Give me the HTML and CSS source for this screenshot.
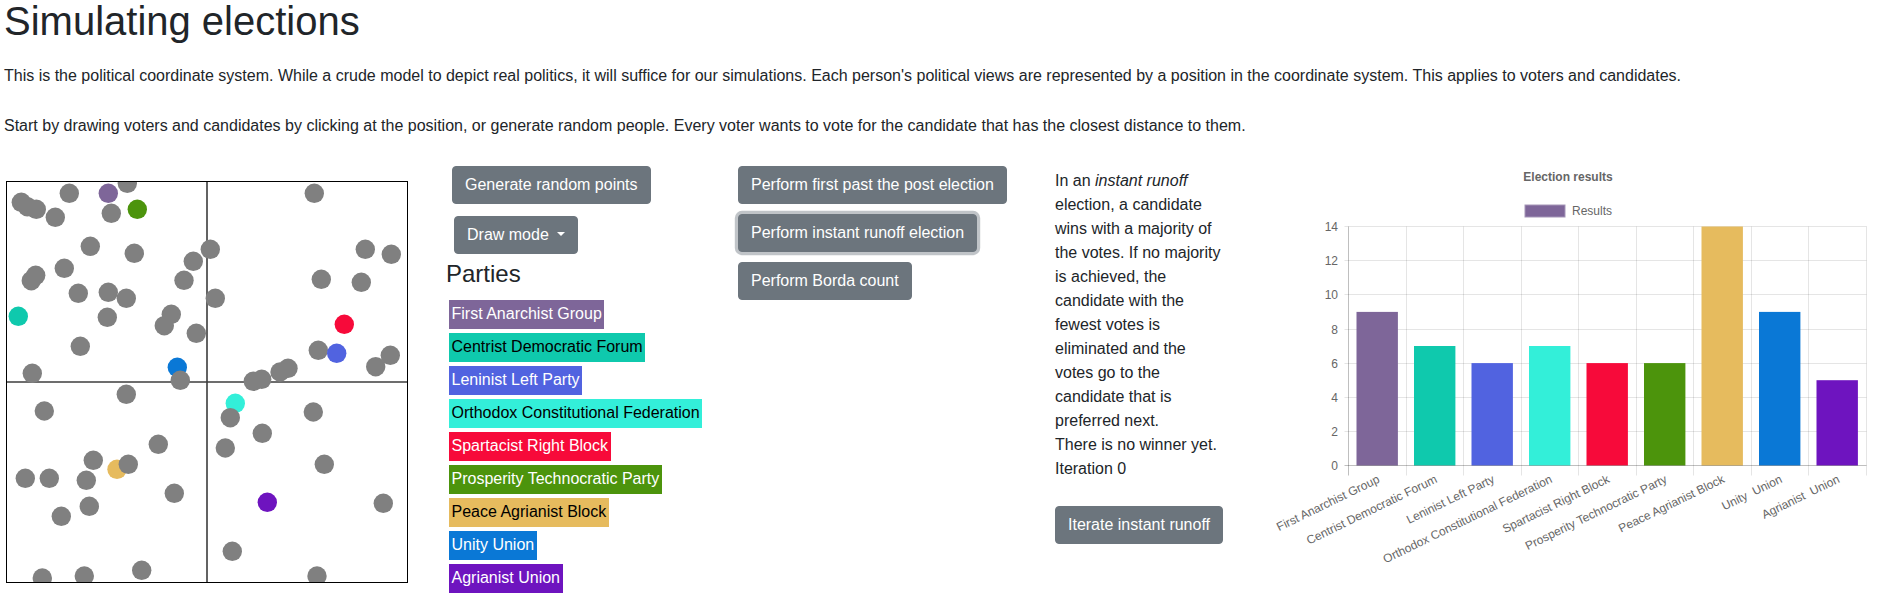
FILE: index.html
```html
<!DOCTYPE html>
<html lang="en">
<head>
<meta charset="utf-8">
<title>Simulating elections</title>
<link rel="stylesheet" href="styles.css">
</head>
<body>
<div class="page">
  <h1 class="title">Simulating elections</h1>
  <p class="intro first">This is the political coordinate system. While a crude model to depict real politics, it will suffice for our simulations. Each person's political views are represented by a position in the coordinate system. This applies to voters and candidates.</p>
  <p class="intro second">Start by drawing voters and candidates by clicking at the position, or generate random people. Every voter wants to vote for the candidate that has the closest distance to them.</p>

  <div class="workspace">
    <div class="col-board">
      <svg class="board" width="400" height="400" viewBox="0 0 400 400">
        <line class="axis" x1="200" y1="0" x2="200" y2="400"/>
        <line class="axis" x1="0" y1="200" x2="400" y2="200"/>
        <circle cx="170.3" cy="185.3" r="9.7" fill="#0a78d6"/>
        <circle cx="228.3" cy="221.3" r="9.7" fill="#33efd9"/>
        <circle cx="110" cy="287.3" r="9.7" fill="#e6bb5e"/>
        <g class="voters">
          <circle cx="62.3" cy="11.3" r="9.7"/>
          <circle cx="120.3" cy="1.3" r="9.7"/>
          <circle cx="14.3" cy="20.3" r="9.7"/>
          <circle cx="20.3" cy="24.7" r="9.7"/>
          <circle cx="29.3" cy="27.3" r="9.7"/>
          <circle cx="48.3" cy="35.3" r="9.7"/>
          <circle cx="104.3" cy="31.3" r="9.7"/>
          <circle cx="307.3" cy="11.3" r="9.7"/>
          <circle cx="83.3" cy="64.3" r="9.7"/>
          <circle cx="127.3" cy="71.3" r="9.7"/>
          <circle cx="203.3" cy="67.3" r="9.7"/>
          <circle cx="186.3" cy="79.3" r="9.7"/>
          <circle cx="358.3" cy="67.3" r="9.7"/>
          <circle cx="384.3" cy="72.3" r="9.7"/>
          <circle cx="57.3" cy="86.3" r="9.7"/>
          <circle cx="28.7" cy="93.3" r="9.7"/>
          <circle cx="24.3" cy="98.7" r="9.7"/>
          <circle cx="177" cy="98.3" r="9.7"/>
          <circle cx="314.3" cy="97.3" r="9.7"/>
          <circle cx="354.3" cy="100.3" r="9.7"/>
          <circle cx="71.3" cy="111.3" r="9.7"/>
          <circle cx="101.3" cy="110.3" r="9.7"/>
          <circle cx="119.3" cy="116.3" r="9.7"/>
          <circle cx="208.3" cy="116.3" r="9.7"/>
          <circle cx="100.3" cy="135.3" r="9.7"/>
          <circle cx="164.3" cy="132.3" r="9.7"/>
          <circle cx="157.3" cy="143.7" r="9.7"/>
          <circle cx="189.3" cy="151.3" r="9.7"/>
          <circle cx="73.3" cy="164.3" r="9.7"/>
          <circle cx="311.3" cy="168.3" r="9.7"/>
          <circle cx="383.3" cy="173.3" r="9.7"/>
          <circle cx="368.7" cy="184.7" r="9.7"/>
          <circle cx="25.3" cy="191.3" r="9.7"/>
          <circle cx="173.3" cy="198.3" r="9.7"/>
          <circle cx="246.3" cy="199.3" r="9.7"/>
          <circle cx="254.7" cy="197.3" r="9.7"/>
          <circle cx="273" cy="190" r="9.7"/>
          <circle cx="281" cy="186.3" r="9.7"/>
          <circle cx="119.3" cy="212.3" r="9.7"/>
          <circle cx="37.3" cy="229" r="9.7"/>
          <circle cx="223.3" cy="235.7" r="9.7"/>
          <circle cx="306.3" cy="230" r="9.7"/>
          <circle cx="255.3" cy="251.3" r="9.7"/>
          <circle cx="151.3" cy="262.3" r="9.7"/>
          <circle cx="218.3" cy="266" r="9.7"/>
          <circle cx="86.3" cy="278.3" r="9.7"/>
          <circle cx="121.3" cy="282.3" r="9.7"/>
          <circle cx="317.3" cy="282.3" r="9.7"/>
          <circle cx="18.3" cy="296.3" r="9.7"/>
          <circle cx="42.3" cy="296.3" r="9.7"/>
          <circle cx="79.3" cy="298.3" r="9.7"/>
          <circle cx="167.3" cy="311.3" r="9.7"/>
          <circle cx="376.3" cy="321.3" r="9.7"/>
          <circle cx="82.3" cy="324.3" r="9.7"/>
          <circle cx="54.3" cy="334.3" r="9.7"/>
          <circle cx="225.3" cy="369.3" r="9.7"/>
          <circle cx="134.7" cy="388.3" r="9.7"/>
          <circle cx="35.3" cy="396" r="9.7"/>
          <circle cx="77.3" cy="394" r="9.7"/>
          <circle cx="310" cy="394" r="9.7"/>
        </g>
        <circle cx="101.3" cy="11.3" r="9.7" fill="#7e6699"/>
        <circle cx="130.3" cy="27.3" r="9.7" fill="#4c940c"/>
        <circle cx="11.3" cy="134.3" r="9.7" fill="#0fc9ad"/>
        <circle cx="337.3" cy="142.3" r="9.7" fill="#f70a3a"/>
        <circle cx="329.7" cy="171.3" r="9.7" fill="#5163e0"/>
        <circle cx="260.3" cy="320.3" r="9.7" fill="#6e14bf"/>
      </svg>
    </div>

    <div class="col-parties">
      <button class="btn btn-generate">Generate random points</button>
      <button class="btn btn-draw dropdown-toggle">Draw mode </button>
      <h4 class="parties-title">Parties</h4>
      <div class="party-list">
        <span class="party p-anarchist">First Anarchist Group</span>
        <span class="party p-centrist">Centrist Democratic Forum</span>
        <span class="party p-leninist">Leninist Left Party</span>
        <span class="party p-orthodox">Orthodox Constitutional Federation</span>
        <span class="party p-spartacist">Spartacist Right Block</span>
        <span class="party p-prosperity">Prosperity Technocratic Party</span>
        <span class="party p-peace">Peace Agrianist Block</span>
        <span class="party p-unity">Unity  Union</span>
        <span class="party p-agrianist">Agrianist  Union</span>
      </div>
    </div>

    <div class="col-actions">
      <button class="btn">Perform first past the post election</button>
      <button class="btn btn-focus">Perform instant runoff election</button>
      <button class="btn">Perform Borda count</button>
    </div>

    <div class="col-info">
      <div class="info-text">In an <i>instant runoff</i> election, a candidate wins with a majority of the votes. If no majority is achieved, the candidate with the fewest votes is eliminated and the votes go to the candidate that is preferred next.</div>
      <div class="info-text">There is no winner yet.</div>
      <div class="info-text">Iteration 0</div>
      <button class="btn btn-iterate">Iterate instant runoff</button>
    </div>

    <div class="col-chart">
      <svg class="chart" width="623" height="420" viewBox="0 0 623 420">
        <text class="chart-title" x="308" y="15" text-anchor="middle">Election results</text>
        <rect x="265" y="39" width="40" height="12" fill="#7e6699" stroke="#a596b8" stroke-width="1"/>
        <text class="chart-text" x="312" y="49">Results</text>

        <g class="grid">
          <line x1="84.5" y1="60.5" x2="606.5" y2="60.5"/>
          <line x1="84.5" y1="94.5" x2="606.5" y2="94.5"/>
          <line x1="84.5" y1="128.5" x2="606.5" y2="128.5"/>
          <line x1="84.5" y1="163.5" x2="606.5" y2="163.5"/>
          <line x1="84.5" y1="197.5" x2="606.5" y2="197.5"/>
          <line x1="84.5" y1="231.5" x2="606.5" y2="231.5"/>
          <line x1="84.5" y1="265.5" x2="606.5" y2="265.5"/>
          <line x1="146.5" y1="60.5" x2="146.5" y2="309.5"/>
          <line x1="203.5" y1="60.5" x2="203.5" y2="309.5"/>
          <line x1="261.5" y1="60.5" x2="261.5" y2="309.5"/>
          <line x1="318.5" y1="60.5" x2="318.5" y2="309.5"/>
          <line x1="376.5" y1="60.5" x2="376.5" y2="309.5"/>
          <line x1="433.5" y1="60.5" x2="433.5" y2="309.5"/>
          <line x1="491.5" y1="60.5" x2="491.5" y2="309.5"/>
          <line x1="548.5" y1="60.5" x2="548.5" y2="309.5"/>
          <line x1="606.5" y1="60.5" x2="606.5" y2="309.5"/>
        </g>

        <rect x="96.5" y="145.9" width="41.4" height="153.6" fill="#7e6699"/>
        <rect x="154" y="180" width="41.4" height="119.5" fill="#0fc9ad"/>
        <rect x="211.5" y="197.1" width="41.4" height="102.4" fill="#5163e0"/>
        <rect x="269" y="180" width="41.4" height="119.5" fill="#33efd9"/>
        <rect x="326.5" y="197.1" width="41.4" height="102.4" fill="#f70a3a"/>
        <rect x="384" y="197.1" width="41.4" height="102.4" fill="#4c940c"/>
        <rect x="441.5" y="60.5" width="41.4" height="239" fill="#e6bb5e"/>
        <rect x="499" y="145.9" width="41.4" height="153.6" fill="#0a78d6"/>
        <rect x="556.5" y="214.2" width="41.4" height="85.3" fill="#6e14bf"/>

        <g class="axis-lines">
          <line x1="88.5" y1="60.5" x2="88.5" y2="309.5"/>
          <line x1="84.5" y1="299.5" x2="606.5" y2="299.5"/>
        </g>

        <g class="chart-text" text-anchor="end">
          <text x="78" y="64.5">14</text>
          <text x="78" y="98.5">12</text>
          <text x="78" y="132.5">10</text>
          <text x="78" y="167.5">8</text>
          <text x="78" y="201.5">6</text>
          <text x="78" y="235.5">4</text>
          <text x="78" y="269.5">2</text>
          <text x="78" y="303.5">0</text>
        </g>

        <g class="chart-text x-labels" text-anchor="end">
          <text transform="translate(119 313) rotate(-26)">First Anarchist Group</text>
          <text transform="translate(176.5 313) rotate(-26)">Centrist Democratic Forum</text>
          <text transform="translate(234 313) rotate(-26)">Leninist Left Party</text>
          <text transform="translate(291.5 313) rotate(-26)">Orthodox Constitutional Federation</text>
          <text transform="translate(349 313) rotate(-26)">Spartacist Right Block</text>
          <text transform="translate(406.5 313) rotate(-26)">Prosperity Technocratic Party</text>
          <text transform="translate(464 313) rotate(-26)">Peace Agrianist Block</text>
          <text transform="translate(521.5 313) rotate(-26)">Unity  Union</text>
          <text transform="translate(579 313) rotate(-26)">Agrianist  Union</text>
        </g>
      </svg>
    </div>
  </div>
</div>
</body>
</html>
```

FILE: styles.css
```css
* { box-sizing: border-box; }

body {
  margin: 0;
  font-family: "Liberation Sans", Arial, sans-serif;
  font-size: 16px;
  line-height: 1.5;
  color: #212529;
  background: #fff;
}

.page {
  padding-left: 4px;
}

.title {
  font-size: 40px;
  font-weight: 400;
  line-height: 48px;
  margin: -3px 0 0;
}

.intro {
  margin: 0;
}
.intro.first { margin-top: 19px; }
.intro.second { margin-top: 26px; }

.workspace {
  display: flex;
  align-items: flex-start;
  margin-top: 28px;
}

/* column 1: coordinate board */
.col-board {
  width: 444px;
  flex: none;
  padding: 15px 0 0 2px;
}
.board {
  display: block;
  box-sizing: content-box;
  border: 1px solid #000;
  background: #fff;
}
.board .axis {
  stroke: #3c3c3c;
  stroke-width: 1.6;
}
.board .voters circle { fill: #808080; }

/* buttons */
.btn {
  display: inline-block;
  font-family: inherit;
  font-size: 16px;
  line-height: 24px;
  padding: 6px 12px;
  color: #fff;
  background: #6c757d;
  border: 1px solid #6c757d;
  border-radius: 4px;
  cursor: pointer;
  white-space: nowrap;
}
.btn-focus {
  box-shadow: 0 0 0 3.2px rgba(130, 138, 145, 0.5);
}
.dropdown-toggle::after {
  content: "";
  display: inline-block;
  margin-left: 4px;
  vertical-align: 4px;
  border-top: 4.8px solid #fff;
  border-right: 4.8px solid transparent;
  border-left: 4.8px solid transparent;
  border-bottom: 0;
}

/* column 2: parties */
.col-parties {
  width: 290px;
  flex: none;
  display: flex;
  flex-direction: column;
  align-items: flex-start;
}
.btn-generate { margin-left: 4px; }
.btn-draw { margin-left: 6px; margin-top: 12px; white-space: pre; }
.parties-title {
  font-size: 24px;
  font-weight: 400;
  line-height: 28.8px;
  margin: 6px 0 11.2px -2px;
}
.party-list {
  display: flex;
  flex-direction: column;
  align-items: flex-start;
  gap: 4.2px;
  margin-left: 1px;
}
.party {
  display: block;
  padding: 2.4px 2.5px;
  line-height: 24px;
  white-space: nowrap;
}
.p-anarchist { background: #7e6699; color: #fff; }
.p-centrist { background: #0fc9ad; color: #000; }
.p-leninist { background: #5163e0; color: #fff; }
.p-orthodox { background: #33efd9; color: #000; }
.p-spartacist { background: #f70a3a; color: #fff; }
.p-prosperity { background: #4c940c; color: #fff; }
.p-peace { background: #e6bb5e; color: #000; }
.p-unity { background: #0a78d6; color: #fff; }
.p-agrianist { background: #6e14bf; color: #fff; }

/* column 3: election actions */
.col-actions {
  width: 317px;
  flex: none;
  display: flex;
  flex-direction: column;
  align-items: flex-start;
  gap: 10px;
}

/* column 4: info */
.col-info {
  width: 205px;
  flex: none;
  padding-top: 2.5px;
}
.info-text {
  width: 170px;
}
.btn-iterate {
  margin-top: 25.5px;
}

/* column 5: chart */
.col-chart {
  width: 623px;
  flex: none;
}
.chart {
  display: block;
}
.chart-title {
  font-family: "Liberation Sans", Arial, sans-serif;
  font-size: 12px;
  font-weight: 700;
  fill: #666;
}
.chart-text {
  font-family: "Liberation Sans", Arial, sans-serif;
  font-size: 12px;
  fill: #666;
  white-space: pre;
}
.x-labels text {
  dominant-baseline: middle;
  white-space: pre;
}
.grid line {
  stroke: rgba(0, 0, 0, 0.1);
  stroke-width: 1;
}
.axis-lines line {
  stroke: rgba(0, 0, 0, 0.25);
  stroke-width: 1;
}
```
